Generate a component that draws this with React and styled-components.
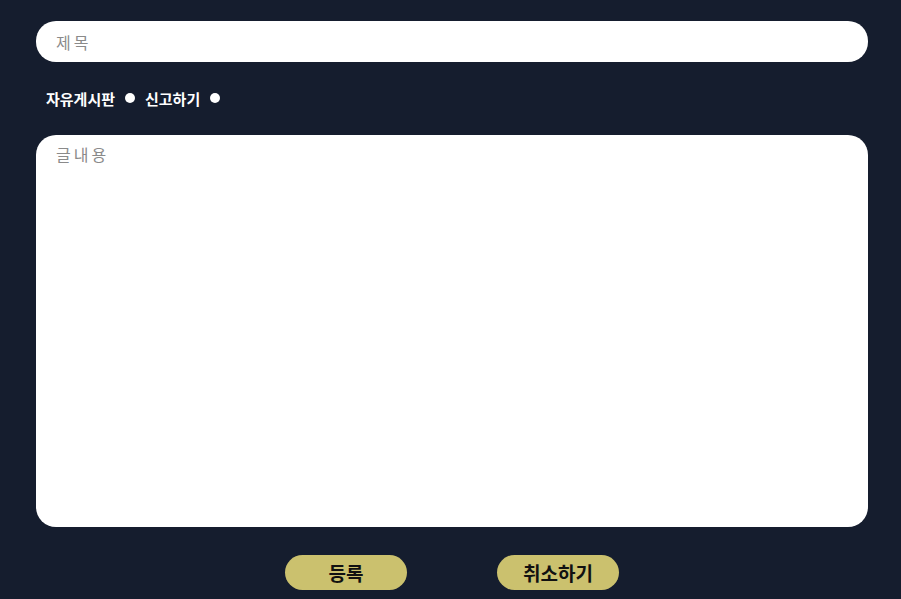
import styled, { createGlobalStyle } from 'styled-components';

const Global = createGlobalStyle`
html, body {
  margin:0;
  padding:0;
  background:#151d2e;
  font-family:"Noto Sans CJK KR","Noto Sans",sans-serif;
}
`

const Form = styled.form`
padding:21px 33px 0 36px;
display:flex;
flex-direction:column;
`

const TitleInput = styled.input`
height:41px;
box-sizing:border-box;
border:none;
border-radius:20px;
padding:0 20px;
font-size:16px;
font-family:inherit;
letter-spacing:3px;
outline:none;
background:#fff;
&::placeholder{ color:#8a8a8a; }
`

const Boards = styled.div`
display:flex;
align-items:center;
height:36px;
margin:18px 0 19px 10px;
`

const BoardLabel = styled.label`
display:flex;
align-items:center;
gap:10px;
margin-right:10px;
color:#fff;
font-size:15px;
font-weight:bold;
`

const Radio = styled.input`
appearance:none;
margin:0;
width:10px;
height:10px;
border-radius:50%;
background:#fff;
&:checked{ background:#c9c06c; }
`

const Content = styled.textarea`
height:392px;
box-sizing:border-box;
border:none;
border-radius:20px;
padding:7px 20px;
resize:none;
font-size:16px;
font-family:inherit;
letter-spacing:3px;
outline:none;
&::placeholder{ color:#8a8a8a; }
`

const Buttons = styled.div`
display:flex;
justify-content:center;
gap:90px;
margin-top:28px;
`

const Btn = styled.button`
width:122px;
height:35px;
padding:0;
border:none;
border-radius:18px;
background:#cbc16e;
color:#111;
font-family:inherit;
font-size:19px;
font-weight:bold;
cursor:pointer;
`

const App = ()=>{
    return <>
    <Global/>
    <Form onSubmit={e=>e.preventDefault()}>
        <TitleInput placeholder="제목" autoFocus/>
        <Boards>
            <BoardLabel>자유게시판 <Radio type="radio" name="board"/></BoardLabel>
            <BoardLabel>신고하기 <Radio type="radio" name="board"/></BoardLabel>
        </Boards>
        <Content placeholder="글내용"/>
        <Buttons>
            <Btn type="submit">등록</Btn>
            <Btn type="button">취소하기</Btn>
        </Buttons>
    </Form>
    </>
}

export default App;
